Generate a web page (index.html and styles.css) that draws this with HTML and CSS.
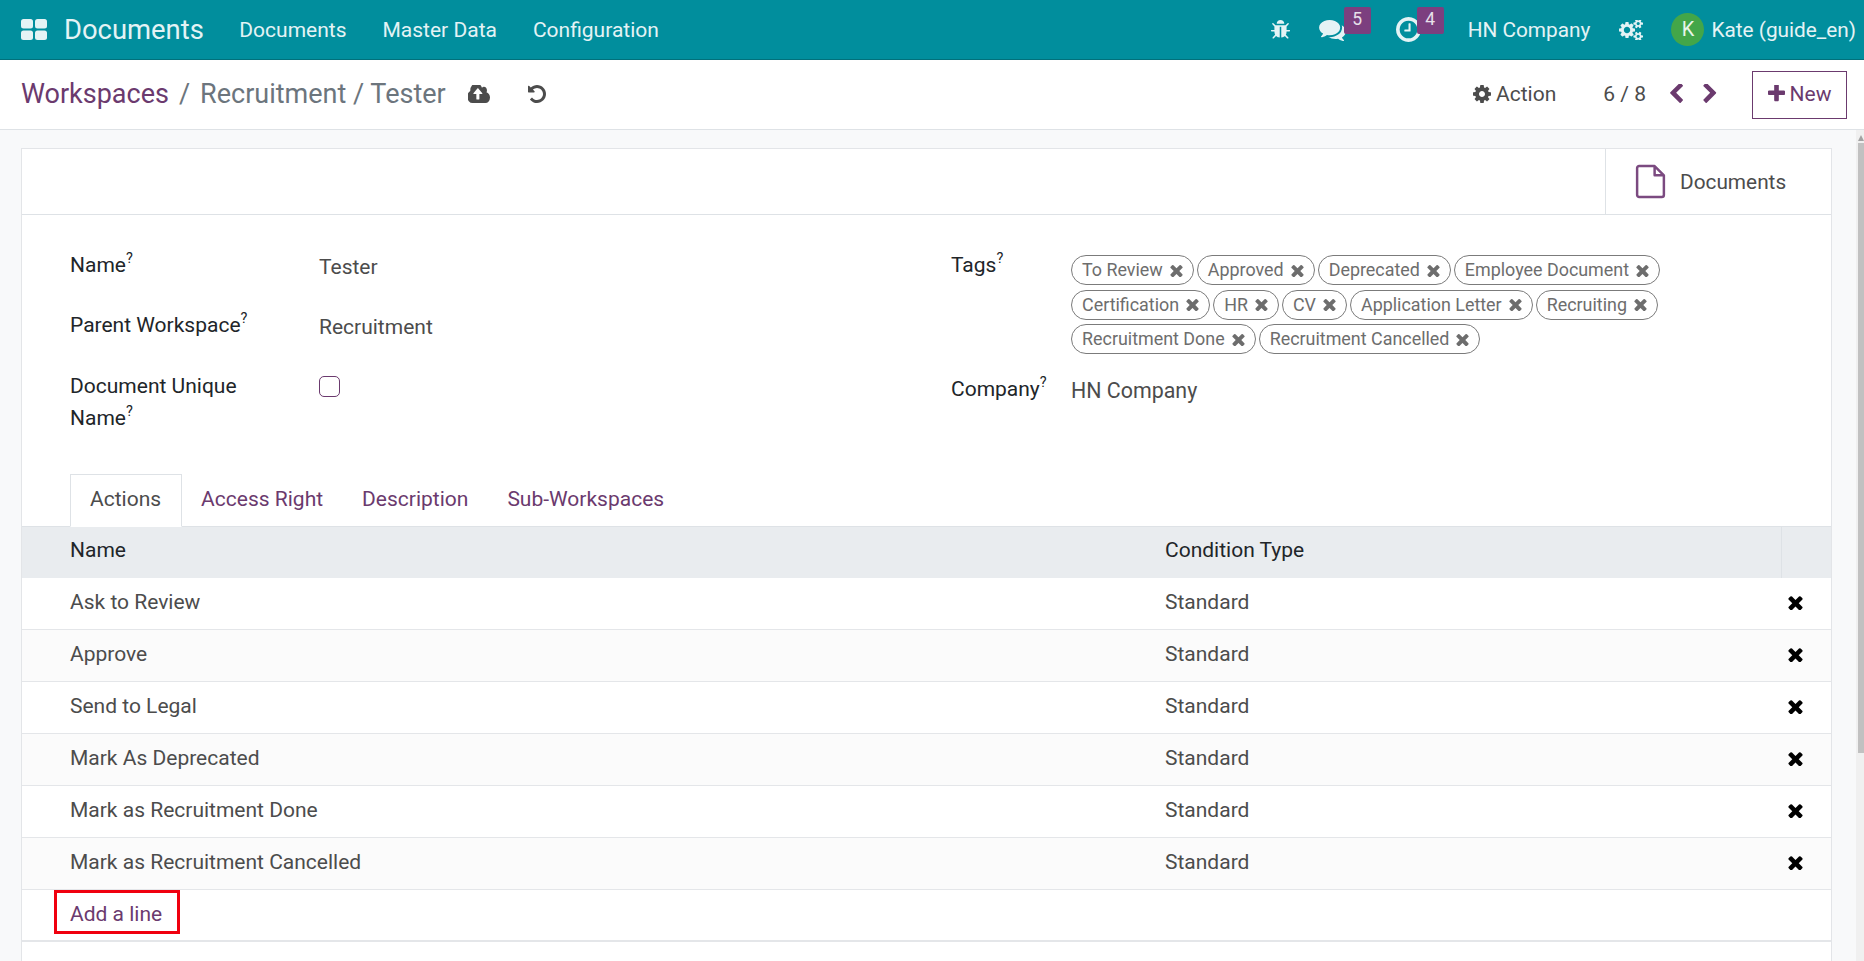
FILE: index.html
```html
<!DOCTYPE html>
<html lang="en">
<head>
<meta charset="utf-8">
<title>Documents</title>
<link rel="stylesheet" href="styles.css">
</head>
<body>
<svg class="defs" width="0" height="0">
  <defs>
    <path id="i-times" d="M1490 1322q0 40-28 68l-136 136q-28 28-68 28t-68-28l-294-294-294 294q-28 28-68 28t-68-28l-136-136q-28-28-28-68t28-68l294-294-294-294q-28-28-28-68t28-68l136-136q28-28 68-28t68 28l294 294 294-294q28-28 68-28t68 28l136 136q28 28 28 68t-28 68l-294 294 294 294q28 28 28 68z"/>
    <path id="i-cog" fill-rule="evenodd" d="M1152 896q0-106-75-181t-181-75-181 75-75 181 75 181 181 75 181-75 75-181zm512-109v222q0 12-8 23t-20 13l-185 28q-19 54-39 91 35 50 107 138 10 12 10 25t-9 23q-27 37-99 108t-94 71q-12 0-26-9l-138-108q-44 23-91 38-16 136-29 186-7 28-36 28h-222q-14 0-24.500-8.500t-11.500-21.500l-28-184q-49-16-90-37l-141 107q-10 9-25 9-14 0-25-11-126-114-165-168-7-10-7-23 0-12 8-23 15-21 51-66.500t54-70.500q-27-50-41-99l-183-27q-13-2-21-12.500t-8-23.500v-222q0-12 8-23t19-13l186-28q14-46 39-92-40-57-107-138-10-12-10-24 0-10 9-23 26-36 98.500-107.500t94.500-71.500q13 0 26 10l138 107q44-23 91-38 16-136 29-186 7-28 36-28h222q14 0 24.500 8.500t11.500 21.500l28 184q49 16 90 37l142-107q9-9 24-9 13 0 25 10 129 119 165 170 7 8 7 22 0 12-8 23-15 21-51 66.500t-54 70.500q26 50 41 98l183 28q13 2 21 12.500t8 23.500z"/>
  </defs>
</svg>

<header class="navbar">
  <svg class="apps" viewBox="0 0 26 21"><rect x="0" y="0" width="12" height="9.500" rx="2.500"/><rect x="14" y="0" width="12" height="9.500" rx="2.500"/><rect x="0" y="11.500" width="12" height="9.500" rx="2.500"/><rect x="14" y="11.500" width="12" height="9.500" rx="2.500"/></svg>
  <span class="brand">Documents</span>
  <nav class="menu"><span>Documents</span><span>Master Data</span><span>Configuration</span></nav>
  <div class="systray">
    <svg class="sys bug" viewBox="96 64 1600 1600"><path d="M1696 960q0 26-19 45t-45 19h-224q0 171-67 290l208 209q19 19 19 45t-19 45q-18 19-45 19t-45-19l-198-197q-5 5-15 13t-42 28.500-65 36.500-82 29-97 13v-896h-128v896q-51 0-101.500-13.500t-87-33-66-39-43.500-32.500l-15-14-183 207q-20 21-48 21-24 0-43-16-19-18-20.500-44.500t15.500-46.500l202-227q-58-114-58-274h-224q-26 0-45-19t-19-45 19-45 45-19h224v-294l-173-173q-19-19-19-45t19-45 45-19 45 19l173 173h844l173-173q19-19 45-19t45 19 19 45-19 45l-173 173v294h224q26 0 45 19t19 45zm-480-576h-640q0-133 93.500-226.500t226.500-93.500 226.500 93.500 93.500 226.500z"/></svg>
    <span class="tray-item chat">
      <svg class="sys comments" viewBox="0 128 1792 1536"><path d="M1408 768q0 139-94 257t-256.500 186.500-353.500 68.500q-86 0-176-16-124 88-278 128-36 9-86 16h-3q-11 0-20.500-8t-11.500-21q-1-3-1-6.500t.5-6.500 2-6l2.500-5 3.500-5.500 4-5 4.500-5 4-4.500q5-6 23-25t26-29.500 22.500-29 25-38.500 20.500-44q-124-72-195-177t-71-224q0-139 94-257t256.500-186.500 353.500-68.500 353.500 68.500 256.500 186.500 94 257zm384 256q0 120-71 224.500t-195 176.500q10 24 20.500 44t25 38.500 22.500 29 26 29.500 23 25q1 1 4 4.500t4.500 5 4 5 3.500 5.500l2.500 5 2 6 .5 6.500-1 6.500q-3 14-13 22t-22 7q-50-7-86-16-154-40-278-128-90 16-176 16-271 0-472-132 58 4 88 4 161 0 309-45t264-129q125-92 192-212t67-254q0-77-23-152 129 71 204 178t75 230z"/></svg>
      <b class="badge">5</b>
    </span>
    <span class="tray-item clock">
      <svg class="sys clockface" viewBox="128 128 1536 1536"><path d="M1024 544v448q0 14-9 23t-23 9h-320q-14 0-23-9t-9-23v-64q0-14 9-23t23-9h224v-352q0-14 9-23t23-9h64q14 0 23 9t9 23zm416 352q0-148-73-273t-198-198-273-73-273 73-198 198-73 273 73 273 198 198 273 73 273-73 198-198 73-273zm224 0q0 209-103 385.500t-279.500 279.500-385.500 103-385.500-103-279.500-279.500-103-385.500 103-385.500 279.500-279.500 385.500-103 385.500 103 279.500 279.500 103 385.500z"/></svg>
      <b class="badge">4</b>
    </span>
    <span class="company">HN Company</span>
    <svg class="sys cogs" viewBox="0 128 1920 1536"><path d="M896 896q0-106-75-181t-181-75-181 75-75 181 75 181 181 75 181-75 75-181zm768 512q0-52-38-90t-90-38-90 38-38 90q0 53 37.500 90.500t90.500 37.500 90.500-37.500 37.500-90.500zm0-1024q0-52-38-90t-90-38-90 38-38 90q0 53 37.500 90.500t90.500 37.500 90.500-37.500 37.500-90.500zm-384 421v185q0 10-7 19.500t-16 10.500l-155 24q-11 35-32 76 34 48 90 115 7 11 7 20 0 12-7 19-23 30-82.500 89.500t-78.500 59.500q-11 0-21-7l-115-90q-37 19-77 31-11 108-23 155-7 24-30 24h-186q-11 0-20-7.500t-10-17.500l-23-153q-34-10-75-31l-118 89q-7 7-20 7-11 0-21-8-144-133-144-160 0-9 7-19 10-14 41-53t47-61q-23-44-35-82l-152-24q-10-1-17-9.500t-7-19.500v-185q0-10 7-19.500t16-10.500l155-24q11-35 32-76-34-48-90-115-7-11-7-20 0-12 7-20 22-30 82-89t79-59q11 0 21 7l115 90q34-18 77-32 11-108 23-154 7-24 30-24h186q11 0 20 7.500t10 17.500l23 153q34 10 75 31l118-89q8-7 20-7 11 0 21 8 144 133 144 160 0 8-7 19-12 16-42 54t-45 60q23 48 34 82l152 23q10 2 17 10.500t7 19.500zm640 533v140q0 16-149 31-12 27-30 52 51 113 51 138 0 4-4 7-122 71-124 71-8 0-46-47t-52-68q-20 2-30 2t-30-2q-14 21-52 68t-46 47q-2 0-124-71-4-3-4-7 0-25 51-138-18-25-30-52-149-15-149-31v-140q0-16 149-31 13-29 30-52-51-113-51-138 0-4 4-7 4-2 35-20t59-34 30-16q8 0 46 46.500t52 67.500q20-2 30-2t30 2q51-71 92-112l6-2q4 0 124 70 4 3 4 7 0 25-51 138 17 23 30 52 149 15 149 31zm0-1024v140q0 16-149 31-12 27-30 52 51 113 51 138 0 4-4 7-122 71-124 71-8 0-46-47t-52-68q-20 2-30 2t-30-2q-14 21-52 68t-46 47q-2 0-124-71-4-3-4-7 0-25 51-138-18-25-30-52-149-15-149-31v-140q0-16 149-31 13-29 30-52-51-113-51-138 0-4 4-7 4-2 35-20t59-34 30-16q8 0 46 46.500t52 67.500q20-2 30-2t30 2q51-71 92-112l6-2q4 0 124 70 4 3 4 7 0 25-51 138 17 23 30 52 149 15 149 31z"/></svg>
    <span class="avatar">K</span>
    <span class="user">Kate (guide_en)</span>
  </div>
</header>

<section class="control">
  <div class="crumbs">
    <span class="crumb-link">Workspaces</span><span class="crumb-sep">/</span><span class="crumb-cur">Recruitment / Tester</span>
    <svg class="cloud" viewBox="0 256 1856 1280" preserveAspectRatio="none"><path fill-rule="evenodd" d="M1216 864q0-14-9-23l-352-352q-9-9-23-9t-23 9l-351 351q-10 12-10 24 0 14 9 23t23 9h224v352q0 13 9.500 22.500t22.500 9.500h192q13 0 22.500-9.500t9.500-22.500v-352h224q13 0 22.500-9.500t9.500-22.500zm640 288q0 159-112.500 271.500t-271.500 112.500h-1088q-185 0-316.500-131.500t-131.500-316.500q0-130 70-240t188-165q-2-30-2-43 0-212 150-362t362-150q156 0 285.500 87t188.500 231q71-62 166-62 106 0 181 75t75 181q0 76-41 138 130 31 213.500 135.500t83.500 238.500z"/></svg>
    <svg class="undo" viewBox="128 128 1536 1536"><path d="M1664 896q0 156-61 298t-164 245-245 164-298 61q-172 0-327-72.500t-264-204.500q-7-10-6.500-22.500t8.500-20.500l137-138q10-9 25-9 16 2 23 12 73 95 179 147t225 52q104 0 198.500-40.500t163.500-109.500 109.500-163.500 40.500-198.500-40.500-198.500-109.500-163.500-163.500-109.500-198.500-40.500q-98 0-188 35.500t-160 101.500l137 138q31 30 14 69-17 40-59 40h-448q-26 0-45-19t-19-45v-448q0-42 40-59 39-17 69 14l130 129q107-101 244.500-156.500t284.500-55.500q156 0 298 61t245 164 164 245 61 298z"/></svg>
  </div>
  <div class="actions">
    <span class="action"><svg class="cog-icon" viewBox="128 128 1536 1536"><use href="#i-cog"/></svg>Action</span>
    <span class="pager">6 / 8</span>
    <svg class="chev chev-left" viewBox="320 128 1126 1510"><path d="M1427 301l-531 531 531 531q19 19 19 45t-19 45l-166 166q-19 19-45 19t-45-19l-742-742q-19-19-19-45t19-45l742-742q19-19 45-19t45 19l166 166q19 19 19 45t-19 45z"/></svg>
    <svg class="chev chev-right" viewBox="320 128 1126 1510"><path d="M1363 877l-742 742q-19 19-45 19t-45-19l-166-166q-19-19-19-45t19-45l531-531-531-531q-19-19-19-45t19-45l166-166q19-19 45-19t45 19l742 742q19 19 19 45t-19 45z"/></svg>
    <span class="new"><svg class="plus" viewBox="192 192 1408 1408"><path d="M1600 736v192q0 40-28 68t-68 28h-416v416q0 40-28 68t-68 28h-192q-40 0-68-28t-28-68v-416h-416q-40 0-68-28t-28-68v-192q0-40 28-68t68-28h416v-416q0-40 28-68t68-28h192q40 0 68 28t28 68v416h416q40 0 68 28t28 68z"/></svg>New</span>
  </div>
</section>

<div class="workspace">
  <main class="content">
    <article class="sheet">
      <div class="buttonbox">
        <div class="statbtn">
          <svg class="fileicon" viewBox="0 0 30 34"><path d="M2 4a2 2 0 0 1 2-2h15l9 9v19a2 2 0 0 1-2 2H4a2 2 0 0 1-2-2zM19 2v9h9" fill="none" stroke-width="2.400" stroke-linejoin="round"/></svg>
          <span>Documents</span>
        </div>
      </div>

      <div class="form">
        <div class="col col-left">
          <div class="field f-name"><label>Name<sup>?</sup></label><span class="val">Tester</span></div>
          <div class="field f-parent"><label>Parent Workspace<sup>?</sup></label><span class="val">Recruitment</span></div>
          <div class="field f-unique"><label>Document Unique Name<sup>?</sup></label><span class="check"></span></div>
        </div>
        <div class="col col-right">
          <div class="field f-tags"><label>Tags<sup>?</sup></label>
            <div class="tags">
              <span class="tag">To Review<svg viewBox="302 270 1188 1260"><use href="#i-times"/></svg></span>
              <span class="tag">Approved<svg viewBox="302 270 1188 1260"><use href="#i-times"/></svg></span>
              <span class="tag">Deprecated<svg viewBox="302 270 1188 1260"><use href="#i-times"/></svg></span>
              <span class="tag">Employee Document<svg viewBox="302 270 1188 1260"><use href="#i-times"/></svg></span>
              <span class="tag">Certification<svg viewBox="302 270 1188 1260"><use href="#i-times"/></svg></span>
              <span class="tag">HR<svg viewBox="302 270 1188 1260"><use href="#i-times"/></svg></span>
              <span class="tag">CV<svg viewBox="302 270 1188 1260"><use href="#i-times"/></svg></span>
              <span class="tag">Application Letter<svg viewBox="302 270 1188 1260"><use href="#i-times"/></svg></span>
              <span class="tag">Recruiting<svg viewBox="302 270 1188 1260"><use href="#i-times"/></svg></span>
              <span class="tag">Recruitment Done<svg viewBox="302 270 1188 1260"><use href="#i-times"/></svg></span>
              <span class="tag">Recruitment Cancelled<svg viewBox="302 270 1188 1260"><use href="#i-times"/></svg></span>
            </div>
          </div>
          <div class="field f-company"><label>Company<sup>?</sup></label><span class="val">HN Company</span></div>
        </div>
      </div>

      <div class="tabs">
        <span class="tab active">Actions</span><span class="tab">Access Right</span><span class="tab">Description</span><span class="tab">Sub-Workspaces</span>
      </div>

      <div class="table">
        <div class="row head"><span class="c-name">Name</span><span class="c-type">Condition Type</span><span class="c-del"></span></div>
        <div class="row"><span class="c-name">Ask to Review</span><span class="c-type">Standard</span><span class="c-del"><svg viewBox="302 270 1188 1260"><use href="#i-times"/></svg></span></div>
        <div class="row"><span class="c-name">Approve</span><span class="c-type">Standard</span><span class="c-del"><svg viewBox="302 270 1188 1260"><use href="#i-times"/></svg></span></div>
        <div class="row"><span class="c-name">Send to Legal</span><span class="c-type">Standard</span><span class="c-del"><svg viewBox="302 270 1188 1260"><use href="#i-times"/></svg></span></div>
        <div class="row"><span class="c-name">Mark As Deprecated</span><span class="c-type">Standard</span><span class="c-del"><svg viewBox="302 270 1188 1260"><use href="#i-times"/></svg></span></div>
        <div class="row"><span class="c-name">Mark as Recruitment Done</span><span class="c-type">Standard</span><span class="c-del"><svg viewBox="302 270 1188 1260"><use href="#i-times"/></svg></span></div>
        <div class="row"><span class="c-name">Mark as Recruitment Cancelled</span><span class="c-type">Standard</span><span class="c-del"><svg viewBox="302 270 1188 1260"><use href="#i-times"/></svg></span></div>
        <div class="row addrow"><span class="addline">Add a line</span></div>
      </div>
    </article>
  </main>
  <div class="scrollbar">
    <span class="sb-arrow"></span>
    <span class="sb-thumb"></span>
  </div>
</div>
</body>
</html>
```

FILE: styles.css
```css
*, *::before, *::after { box-sizing: border-box; }
html, body { margin: 0; height: 100%; overflow: hidden; }
body {
  display: flex;
  flex-direction: column;
  font-family: Roboto, "Liberation Sans", sans-serif;
  font-size: 21px;
  color: #4c4c4c;
  background: #f8f9fa;
}
.defs { position: absolute; }

/* Navbar */
.navbar {
  height: 60px;
  flex: none;
  display: flex;
  align-items: center;
  background: #018e9d;
  border-bottom: 1px solid #01707b;
  color: #e4f3f5;
  padding-left: 21px;
}
.apps { width: 26px; height: 21px; fill: #e4f3f5; margin-right: 17px; }
.brand { font-size: 27.4px; margin-right: 35.500px; }
.menu { display: flex; gap: 36px; }
.systray { margin-left: auto; display: flex; align-items: center; padding-right: 8px; }
.sys { fill: #e4f3f5; }
.bug { width: 19px; height: 19px; margin-right: 29px; }
.tray-item { position: relative; display: flex; }
.comments { width: 27px; height: 23px; }
.chat { margin-right: 50px; }
.clockface { width: 25px; height: 25px; }
.clock { margin-right: 47px; }
.badge {
  position: absolute;
  top: -11px;
  left: 25px;
  width: 27px;
  height: 27px;
  background: #7c3f7f;
  border-radius: 2px;
  font-weight: 400;
  font-size: 17.5px;
  line-height: 24px;
  text-align: center;
  color: #e8e0ea;
}
.clock .badge { left: 21px; top: -10px; }
.company { margin-right: 29px; font-size: 20.8px; }
.cogs { width: 24px; height: 20px; margin-right: 28px; }
.avatar {
  width: 33px;
  height: 33px;
  border-radius: 50%;
  background: #43a649;
  color: #e8f5e9;
  text-align: center;
  line-height: 33px;
  font-size: 20px;
  margin-right: 7px;
}
.user { font-size: 20.8px; }

/* Control panel */
.control {
  height: 70px;
  flex: none;
  display: flex;
  align-items: center;
  justify-content: space-between;
  background: #fff;
  border-bottom: 1px solid #dee2e6;
  padding: 0 17px 0 21px;
}
.crumbs { display: flex; align-items: center; font-size: 27px; color: #6c757d; padding-bottom: 2px; }
.crumb-link { color: #6b3a6e; }
.crumb-sep { margin: 0 10px; }
.cloud { width: 22px; height: 18px; fill: #4c4c4c; margin-left: 22px; }
.undo { width: 18px; height: 18px; margin-left: 38px; fill: #4c4c4c; }
.actions { display: flex; align-items: center; }
.action { display: flex; align-items: center; gap: 5px; margin-right: 47px; padding-bottom: 2px; }
.cog-icon { width: 18px; height: 18px; fill: #4c4c4c; }
.pager { margin-right: 23px; padding-bottom: 2px; }
.chev { width: 14px; height: 19px; fill: #6b3a6e; margin-bottom: 2px; }
.chev-left { margin-right: 20px; }
.chev-right { margin-right: 35px; }
.new {
  display: flex;
  align-items: center;
  justify-content: center;
  gap: 5px;
  height: 48px;
  width: 95px;
  padding-bottom: 2px;
  border: 1px solid #6b3a6e;
  color: #6b3a6e;
}
.plus { width: 17px; height: 17px; fill: #6b3a6e; }

/* Content and scrollbar */
.workspace { flex: 1; min-height: 0; display: flex; }
.content {
  flex: 1;
  min-width: 0;
  overflow: hidden;
  padding: 18px 24px 0 21px;
}
.scrollbar {
  width: 8px;
  flex: none;
  display: flex;
  flex-direction: column;
  align-items: flex-end;
  background: #f0f0f0;
}
.sb-arrow {
  width: 0;
  height: 0;
  margin: 5px 0 2px;
  border-left: 3.5px solid transparent;
  border-right: 3.5px solid transparent;
  border-bottom: 6px solid #a3a3a3;
}
.sb-thumb { width: 6px; height: 610px; background: #c1c1c1; }

.sheet {
  background: #fff;
  border: 1px solid #e3e5e8;
  min-height: 1060px;
}
.buttonbox {
  height: 66px;
  display: flex;
  justify-content: flex-end;
  border-bottom: 1px solid #dee2e6;
}
.statbtn {
  width: 226px;
  display: flex;
  align-items: center;
  gap: 14px;
  padding-left: 29px;
  border-left: 1px solid #dee2e6;
  font-size: 20.8px;
}
.fileicon { width: 31px; height: 35px; stroke: #7b4a80; fill: none; }

/* Form */
.form { display: grid; grid-template-columns: 881px 1fr; height: 259px; padding-left: 48px; }
.col { padding-top: 34px; }
.field { display: grid; grid-template-columns: 249px 1fr; line-height: 32px; }
.col-right .field { grid-template-columns: 120px 640px; }
label { color: #212529; }
sup { font-size: 14.5px; line-height: 0; vertical-align: 9px; }
.val { padding-top: 2px; }
.f-parent { margin-top: 26px; }
.f-unique { margin-top: 27px; }
.f-unique label { width: 190px; }
.check {
  width: 21px;
  height: 21px;
  margin-top: 6px;
  border: 1px solid #6b3a6e;
  border-radius: 5px;
  background: #fff;
}
.tags { display: flex; flex-wrap: wrap; column-gap: 3px; row-gap: 4.600px; padding-top: 6px; }
.tag {
  display: inline-flex;
  align-items: center;
  height: 30px;
  padding: 0 10px;
  border: 1px solid #7b7b7b;
  border-radius: 15px;
  color: #6d6d6d;
  font-size: 17.9px;
  line-height: 28px;
}
.tag svg { width: 13px; height: 13px; fill: #6d6d6d; margin-left: 7px; }
.f-company { margin-top: 19px; }
.f-company .val { font-size: 21.4px; }

/* Tabs */
.tabs { display: flex; height: 52px; padding-left: 48px; }
.tab {
  padding: 0 19px 0 18px;
  line-height: 49px;
  color: #6b3a6e;
  border: 1px solid transparent;
}
.tab.active {
  padding: 0 20px 0 19px;
  color: #4c4c4c;
  border-color: #dee2e6;
  border-bottom: 1px solid #fff;
  margin-bottom: -1px;
  position: relative;
}

/* Table */
.table { border-top: 1px solid #dee2e6; }
.row {
  height: 52px;
  display: grid;
  grid-template-columns: 1137px 1fr 50px;
  align-items: center;
  border-bottom: 1px solid #e4e6e9;
}
.row:nth-child(odd):not(.head) { background: #fbfbfb; }
.row .c-name { padding: 0 0 3px 48px; }
.row .c-type { padding: 0 0 3px 6px; }
.row .c-del { display: flex; justify-content: flex-start; padding: 0 0 3px 7px; }
.c-del svg { width: 15px; height: 15px; fill: #000; }
.head { background: #e9ecef; color: #212529; border-bottom: 0; height: 51px; }
.head span { align-self: stretch; display: flex; align-items: center; }
.row.head .c-name, .row.head .c-type { padding-bottom: 5px; }
.row.head .c-del { border-left: 1px solid #dee2e6; }
.row.addrow { display: block; background: #fff; border-bottom: 2px solid #e4e6e9; position: relative; line-height: 49px; padding-left: 48px; }
.addline { color: #6b3a6e; }
.addline::before {
  content: "";
  position: absolute;
  left: 32px;
  top: 0;
  width: 126px;
  height: 44px;
  border: 3px solid #f0000f;
}
```
